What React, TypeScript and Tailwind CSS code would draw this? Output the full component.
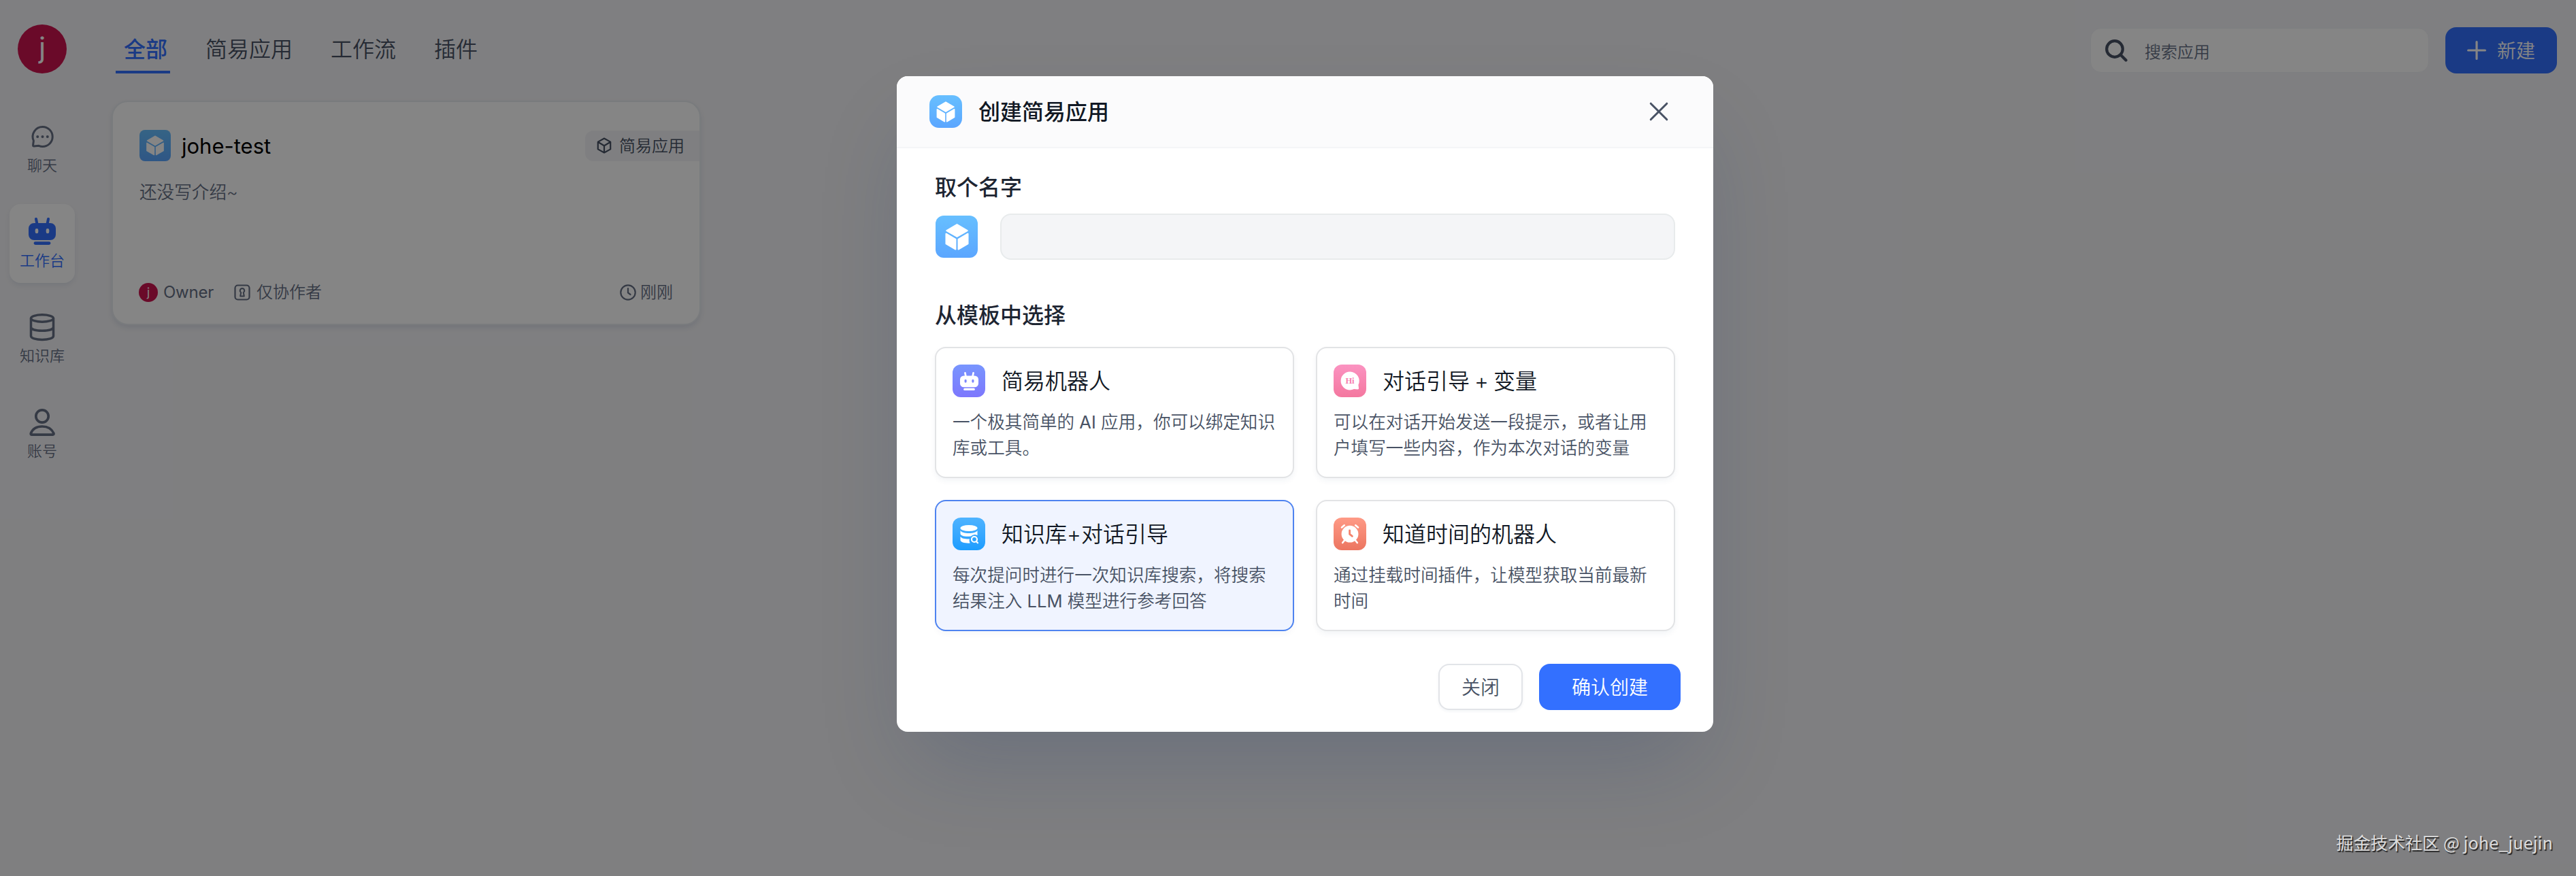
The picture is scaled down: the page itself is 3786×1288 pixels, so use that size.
import React from "react";

const Cube = ({ className }: { className: string }) => (
  <svg viewBox="0 0 48 48" className={className} fill="white" stroke="white" strokeWidth="1.6" strokeLinejoin="round">
    <path d="M24 9.6 36 16.6 24 23.6 12 16.6Z" />
    <path d="M11.4 20.2 22.4 26.6V38.2L11.4 31.8Z" />
    <path d="M36.6 20.2 25.6 26.6V38.2L36.6 31.8Z" />
  </svg>
);

const Robot = ({ className }: { className: string }) => (
  <svg viewBox="0 0 40 40" className={className} fill="currentColor">
    <path d="M11 2 12.6 10M29 2 27.4 10" stroke="currentColor" strokeWidth="4" strokeLinecap="round" />
    <path
      fillRule="evenodd"
      d="M8 8H32a8 8 0 0 1 8 8V25a8 8 0 0 1-8 8H8a8 8 0 0 1-8-8V16a8 8 0 0 1 8-8ZM12 16a2.3 2.3 0 0 0-2.3 2.3v2.6a2.3 2.3 0 0 0 4.6 0V18.3a2.3 2.3 0 0 0-2.3-2.3ZM28 16a2.3 2.3 0 0 0-2.3 2.3v2.6a2.3 2.3 0 0 0 4.6 0V18.3a2.3 2.3 0 0 0-2.3-2.3Z"
    />
    <rect x="7.6" y="35.2" width="24.8" height="4.8" rx="2.4" />
  </svg>
);

const ChatIcon = () => (
  <svg viewBox="0 0 40 40" className="size-10" fill="none" stroke="currentColor" strokeWidth="3">
    <path
      d="M20.7 6.5a14.5 14.5 0 1 1 0 29c-2 0-3.9-.4-5.6-1.2L7.6 34.9a1 1 0 0 1-1.1-1.2L7.4 27A14.5 14.5 0 0 1 20.7 6.5Z"
      strokeLinejoin="round"
    />
    <g fill="currentColor" stroke="none">
      <circle cx="13.2" cy="21" r="2" />
      <circle cx="20.5" cy="21" r="2" />
      <circle cx="27.8" cy="21" r="2" />
    </g>
  </svg>
);

const DbIcon = () => (
  <svg viewBox="0 0 40 40" className="size-10 overflow-visible" fill="none" stroke="currentColor" strokeWidth="3.5">
    <ellipse cx="20" cy="8" rx="16.5" ry="5.2" />
    <path d="M3.5 8V34C3.5 37.2 10.5 39.5 20 39.5S36.5 37.2 36.5 34V8M3.5 21C3.5 24.2 10.5 26.3 20 26.3S36.5 24.2 36.5 21" />
  </svg>
);

const UserIcon = () => (
  <svg viewBox="0 0 40 40" className="size-10 overflow-visible" fill="none" stroke="currentColor" strokeWidth="3.7" strokeLinejoin="round">
    <circle cx="20" cy="12" r="9.2" />
    <path d="M3.4 37C6 30.5 12 27 20 27S34 30.5 36.9 37C37.4 38.2 36.7 39.2 35.5 39.2H4.7C3.5 39.2 2.9 38.2 3.4 37Z" />
  </svg>
);

const NavItem = ({ icon, label, active }: { icon: React.ReactNode; label: string; active?: boolean }) => (
  <div
    className={
      active
        ? "flex h-[116px] w-24 flex-col items-center rounded-2xl bg-white pt-5 text-[#3370ff] shadow-[0_4px_8px_rgba(19,51,107,0.08)]"
        : "flex h-[116px] w-24 flex-col items-center rounded-2xl pt-5 text-[#667085]"
    }
  >
    {icon}
    <span className="mt-[7px] text-[22px] leading-8">{label}</span>
  </div>
);

const Hi = () => (
  <svg viewBox="0 0 48 48" className="size-12">
    <path
      fill="white"
      d="M24 10.6a13.4 13.4 0 1 0 0 26.8c2.2 0 4.1-.5 5.9-1.3l5.8.3c.8 0 1.4-.6 1.3-1.4l-.6-5.2A13.4 13.4 0 0 0 24 10.6Z"
    />
    <text x="24" y="28.2" textAnchor="middle" fontSize="12.5" fill="#f77fae" className="font-['Liberation_Serif',serif] font-bold">
      Hi
    </text>
  </svg>
);

const DbSearch = () => (
  <svg viewBox="0 0 48 48" className="size-12" fill="white">
    <ellipse cx="24" cy="15.5" rx="12.5" ry="4.6" />
    <path d="M11.5 19c1.5 2.6 6.5 4 12.5 4s11-1.4 12.5-4v7.2a8 8 0 0 0-9.6 1.4C17 28.6 11.5 26.5 11.5 23.5Z" />
    <path d="M11.5 28c1.7 2.5 6.5 3.7 13.5 3.5-.8 2.5-.2 4.6.9 6.1C18 38 11.5 36.3 11.5 33Z" />
    <circle cx="32" cy="32" r="4" fill="none" stroke="white" strokeWidth="2.2" />
    <path d="M35 35.2 37 37.3" stroke="white" strokeWidth="2.2" strokeLinecap="round" />
  </svg>
);

const Alarm = () => (
  <svg viewBox="0 0 48 48" className="size-12" strokeLinecap="round" fill="none" stroke="white">
    <path d="M12 14.5 15.8 11.3M36 14.5 32.2 11.3" strokeWidth="2.6" />
    <path d="M16 33.5 13.2 37M32 33.5 34.8 37" strokeWidth="2.6" />
    <circle cx="24" cy="24.2" r="12.4" fill="white" stroke="none" />
    <path d="M23.6 18.8V24.4L27.4 27.4" stroke="#f4836c" strokeWidth="2.8" strokeLinejoin="round" />
  </svg>
);

const Template = ({
  tile,
  icon,
  title,
  lines,
  selected,
}: {
  tile: string;
  icon: React.ReactNode;
  title: string;
  lines: React.ReactNode[];
  selected?: boolean;
}) => (
  <div
    className={
      selected
        ? "h-[193px] w-[528px] rounded-2xl border-2 border-[#4e83f0] bg-[#f0f4ff] p-6 shadow-[0_4px_8px_rgba(19,51,107,0.04)]"
        : "h-[193px] w-[528px] rounded-2xl border-2 border-[#e2e3e5] bg-white p-6 shadow-[0_4px_8px_rgba(19,51,107,0.05)]"
    }
  >
    <div className="flex h-12 items-center gap-6">
      <div className={`flex size-12 items-center justify-center rounded-xl bg-linear-to-b text-white ${tile}`}>{icon}</div>
      <span className="pt-0.5 text-[32px] leading-12 text-[#111824] [word-spacing:-2px]">{title}</span>
    </div>
    <div className="mt-[18px] text-[25.6px] leading-[38.4px] whitespace-nowrap text-[#485264]">
      {lines.map((l, i) => (
        <div key={i}>{l}</div>
      ))}
    </div>
  </div>
);

function Sidebar() {
  return (
    <aside className="flex w-[124px] shrink-0 flex-col items-center pt-9">
      <div className="flex size-[72px] items-center justify-center rounded-full bg-[#cc1550] text-[42px] leading-none font-normal text-white">
        <span className="-mt-1">j</span>
      </div>
      <nav className="mt-[52px] flex flex-col gap-6">
        <NavItem icon={<ChatIcon />} label="聊天" />
        <NavItem icon={<Robot className="size-10" />} label="工作台" active />
        <NavItem icon={<DbIcon />} label="知识库" />
        <NavItem icon={<UserIcon />} label="账号" />
      </nav>
    </aside>
  );
}

function Header() {
  return (
    <header className="flex h-[148px] items-start justify-between pt-10 pr-7 pl-[46px]">
      <div className="flex text-[32px] leading-[66px] text-[#485264]">
        <div className="h-[68px] w-20 border-b-4 border-[#3370ff] pl-3 font-medium whitespace-nowrap text-[#3370ff]">全部</div>
        <div className="ml-[52px]">简易应用</div>
        <div className="ml-14">工作流</div>
        <div className="ml-14">插件</div>
      </div>
      <div className="flex gap-6">
        <div className="mt-px flex h-[66px] w-[498px] items-center rounded-2xl border border-[#f0f1f6] bg-white pl-[21px] text-2xl text-[#667085]">
          <svg viewBox="0 0 33 33" className="mr-[25px] size-[33px]" fill="none" stroke="#485264" strokeWidth="4.2" strokeLinecap="round">
            <circle cx="14" cy="14" r="11.8" />
            <path d="M22.8 22.8 30.5 30.5" />
          </svg>
          <span className="pt-1.5">搜索应用</span>
        </div>
        <div className="flex h-[68px] w-[164px] items-center rounded-2xl bg-[#3370ff] pl-8 text-[28px] text-white">
          <svg viewBox="0 0 28 28" className="mr-4 size-7" stroke="white" strokeWidth="3.2" strokeLinecap="round">
            <path d="M14 1.6V26.4M1.6 14H26.4" />
          </svg>
          <span className="pt-0.5">新建</span>
        </div>
      </div>
    </header>
  );
}

function AppCard() {
  return (
    <div className="ml-10 flex h-[330px] w-[866px] flex-col overflow-hidden rounded-3xl border-2 border-[#e8ebf0] bg-white pt-[41px] pl-[39px] shadow-[0_4px_8px_rgba(19,51,107,0.1)]">
      <div className="flex items-center">
        <div className="flex size-[46px] items-center justify-center rounded-lg bg-linear-to-b from-[#67bfff] to-[#5ba6ff]">
          <Cube className="size-[46px]" />
        </div>
        <span className="ml-4 pt-0.5 text-[31px] leading-[44px] font-normal text-black">johe-test</span>
        <div className="ml-auto flex h-[45px] w-[168px] items-center rounded-l-xl bg-[#f4f4f7] pl-4 text-2xl text-[#485264]">
          <svg viewBox="0 0 24 24" className="mr-2.5 size-6" fill="none" stroke="currentColor" strokeWidth="2.2" strokeLinejoin="round">
            <path d="M12 1.5 21.2 6.6V17.4L12 22.5 2.8 17.4V6.6ZM2.8 6.8 12 12.2 21.2 6.8M12 12.2V22.5" />
          </svg>
          <span className="pt-0.5">简易应用</span>
        </div>
      </div>
      <p className="mt-[27px] text-[25.6px] leading-[38px] text-[#667085]">还没写介绍~</p>
      <div className="mt-auto mb-7 flex items-center pr-[39px] text-2xl leading-9 text-[#667085]">
        <div className="-ml-px flex size-7 items-center justify-center rounded-full bg-[#cc1550] text-[17px] leading-none font-normal text-white">j</div>
        <span className="ml-2 w-[74px] font-normal tracking-[-0.01em]">Owner</span>
        <svg viewBox="0 0 24 24" className="ml-[30px] size-6" fill="none" stroke="currentColor" strokeWidth="2.2">
          <rect x="1.5" y="1.5" width="21" height="21" rx="4" />
          <path d="M12 6a3.3 3.3 0 0 0-1.8 6L9.2 17.5H14.8L13.8 12A3.3 3.3 0 0 0 12 6Z" strokeLinejoin="round" strokeWidth="2" />
        </svg>
        <span className="ml-[9px]">仅协作者</span>
        <svg viewBox="0 0 24 24" className="mr-1.5 ml-auto size-6" fill="none" stroke="currentColor" strokeWidth="2.2" strokeLinecap="round">
          <circle cx="12" cy="12" r="10.7" />
          <path d="M12 6V12.5L15.5 15" />
        </svg>
        <span>刚刚</span>
      </div>
    </div>
  );
}

function Dialog() {
  return (
    <div className="h-[964px] w-[1200px] overflow-hidden rounded-2xl bg-white">
      <div className="flex h-[106px] items-center border-b-2 border-[#f4f5f7] bg-[#fbfbfc] pr-[66px] pl-12">
        <div className="flex size-12 items-center justify-center rounded-[14px] bg-linear-to-b from-[#67bfff] to-[#5ba6ff]">
          <Cube className="size-[49px]" />
        </div>
        <h2 className="ml-6 pt-0.5 text-[32px] leading-12 font-medium text-[#111824]">创建简易应用</h2>
        <svg viewBox="0 0 28 28" className="ml-auto size-7" stroke="#485264" strokeWidth="3" strokeLinecap="round">
          <path d="M2.2 2.2 25.8 25.8M25.8 2.2 2.2 25.8" />
        </svg>
      </div>
      <div className="px-14 pt-[34px]">
        <h3 className="text-[32px] leading-12 font-medium text-[#1d2532]">取个名字</h3>
        <div className="mt-3.5 flex items-center">
          <div className="ml-px flex size-[62px] items-center justify-center rounded-xl bg-linear-to-b from-[#67bfff] to-[#5ba6ff]">
            <Cube className="size-[61px]" />
          </div>
          <div className="ml-[33px] h-[68px] w-[992px] rounded-2xl border-2 border-[#e8ebec] bg-[#f4f5f7]" />
        </div>
        <h3 className="mt-[58px] text-[32px] leading-12 font-medium text-[#1d2532]">从模板中选择</h3>
        <div className="mt-[22px] grid grid-cols-2 gap-8">
          <Template
            tile="from-[#7895fe] to-[#7d77fd]"
            icon={<Robot className="size-[27px]" />}
            title="简易机器人"
            lines={[
              <>
                一个极其简单的 <span className="font-normal">AI</span> 应用，你可以绑定知识
              </>,
              "库或工具。",
            ]}
          />
          <Template
            tile="from-[#fb93c1] to-[#f4779f]"
            icon={<Hi />}
            title="对话引导 + 变量"
            lines={["可以在对话开始发送一段提示，或者让用", "户填写一些内容，作为本次对话的变量"]}
          />
          <Template
            tile="from-[#4eb3ff] to-[#1b9dff]"
            icon={<DbSearch />}
            title="知识库+对话引导"
            lines={[
              "每次提问时进行一次知识库搜索，将搜索",
              <>
                结果注入 <span className="font-normal">LLM</span> 模型进行参考回答
              </>,
            ]}
            selected
          />
          <Template
            tile="from-[#fe9a86] to-[#ec7560]"
            icon={<Alarm />}
            title="知道时间的机器人"
            lines={["通过挂载时间插件，让模型获取当前最新", "时间"]}
          />
        </div>
      </div>
      <div className="mt-12 flex justify-end gap-6 pr-12 text-[28px]">
        <div className="flex h-[68px] w-[124px] items-center justify-center rounded-2xl border-2 border-[#e2e4e8] bg-white pt-0.5 text-[#485264] shadow-[0_2px_4px_rgba(19,51,107,0.05)]">
          关闭
        </div>
        <div className="flex h-[68px] w-[208px] items-center justify-center rounded-2xl bg-[#3370ff] pt-0.5 text-white">确认创建</div>
      </div>
    </div>
  );
}

export default function App() {
  return (
    <div className="relative h-[1288px] w-[3786px] overflow-hidden bg-[#f4f4f7] font-['Inter','Noto_Sans_CJK_SC',sans-serif] font-[350]">
      <div className="flex h-full">
        <Sidebar />
        <main className="flex-1">
          <Header />
          <AppCard />
        </main>
      </div>
      <div className="absolute inset-0 flex items-start bg-black/48 pt-28 pl-[1318px]">
        <div className="rounded-2xl shadow-[0_64px_128px_-24px_rgba(19,51,107,0.2)]">
          <Dialog />
        </div>
      </div>
      <div className="absolute right-[34px] bottom-8 font-['Noto_Sans_CJK_SC',sans-serif] text-[25.3px] leading-9 font-normal whitespace-nowrap text-[#dcdcdc] [text-shadow:1.5px_1.5px_1px_#222]">
        掘金技术社区 @ johe_juejin
      </div>
    </div>
  );
}
